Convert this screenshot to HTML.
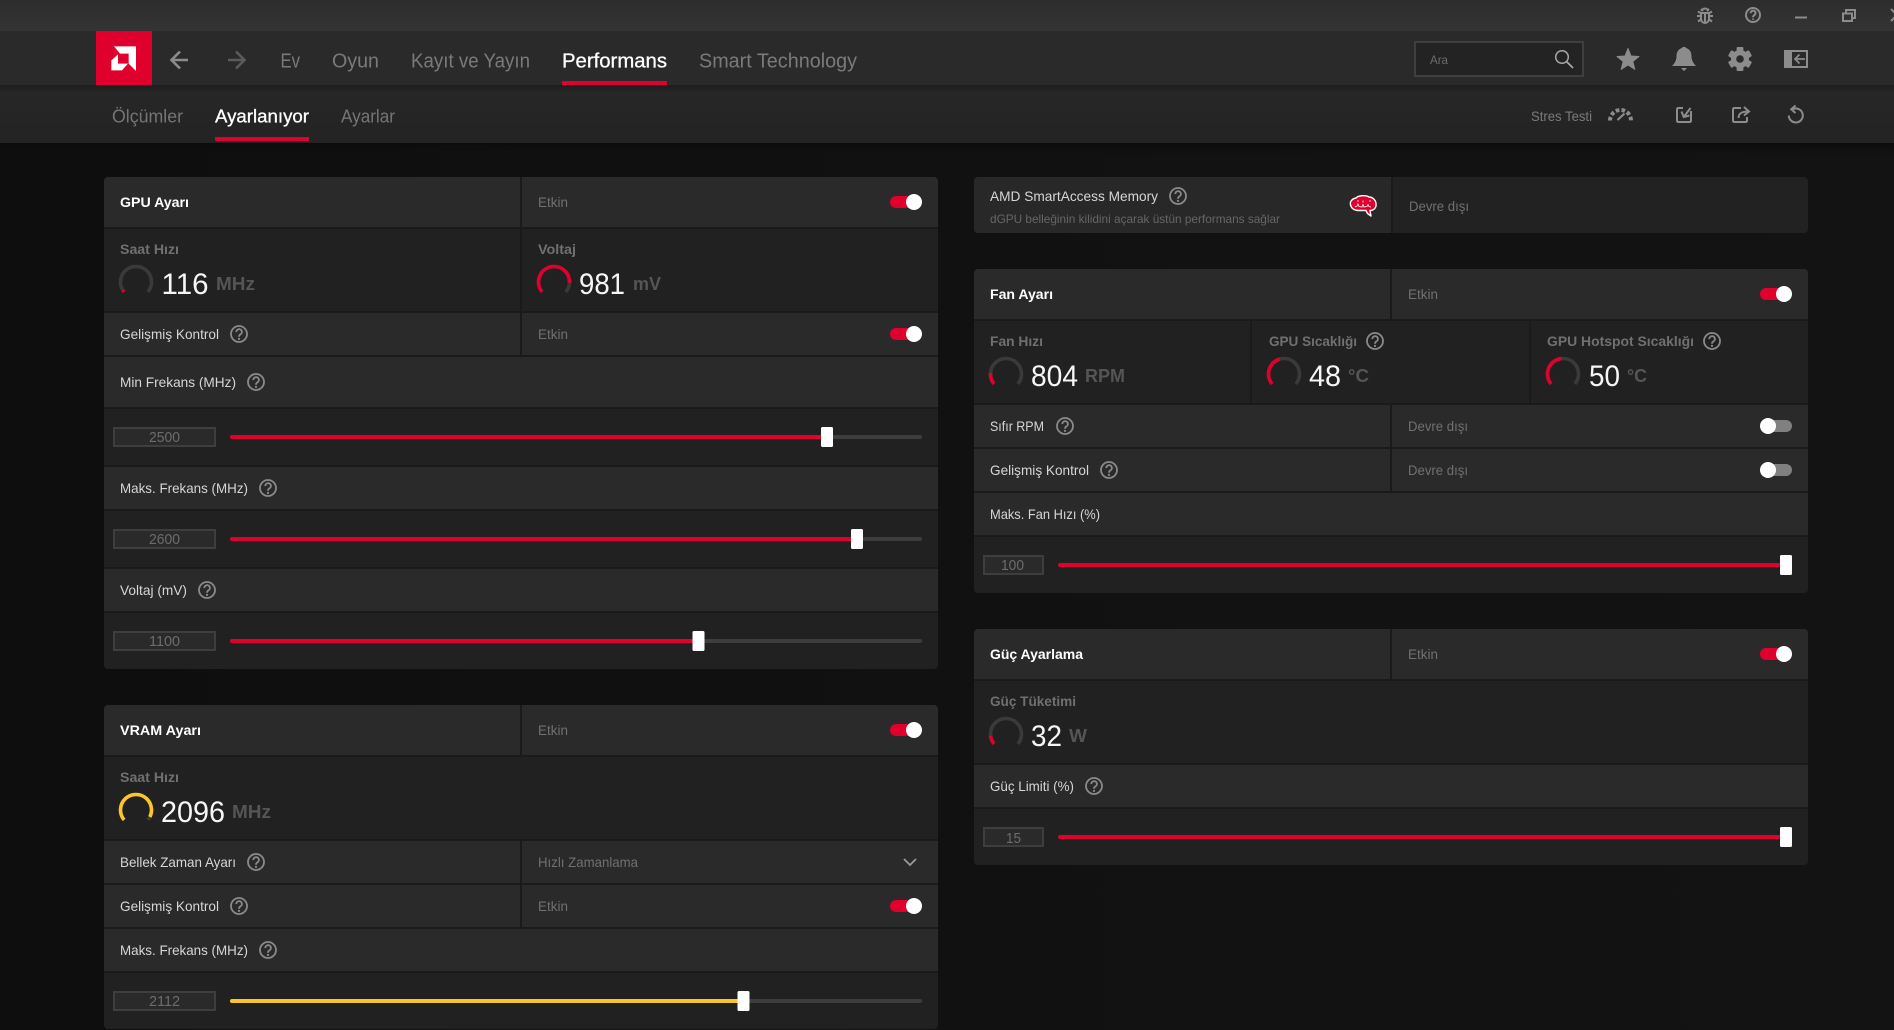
<!DOCTYPE html>
<html lang="tr">
<head>
<meta charset="utf-8">
<title>Performans - Ayarlanıyor</title>
<style>
html,body{margin:0;padding:0;width:1894px;height:1030px;overflow:hidden;background:#111}
svg{display:block}
text{font-family:"Liberation Sans",sans-serif;white-space:pre}
.nav{font-size:20px;fill:#7a7a7a}
.sub{font-size:18px;fill:#757575}
.act{fill:#fff;stroke:#fff;stroke-width:.3px}
.l{font-size:14px;fill:#d6d6d6}
.b{font-size:14px;font-weight:700;fill:#fff}
.m{font-size:14px;font-weight:700;fill:#707070}
.e{font-size:14px;fill:#707070}
.v{font-size:30px;fill:#f6f6f6}
.u{font-size:18px;font-weight:700;fill:#555}
.n{font-size:15px;fill:#6c6c6c}
.lt{fill:#2a2a2a}
.dk{fill:#212121}
.box{fill:#2a2a2a;stroke:#3e3e3e;stroke-width:2}
.tr{fill:#3d3d3d}
.red{fill:#e0002d}
.yel{fill:#fcc62a}
.kn{fill:#fff}
.ic{fill:none;stroke:#8c8c8c;stroke-width:2}
.if{fill:#8c8c8c}
</style>
</head>
<body>
<svg xmlns="http://www.w3.org/2000/svg" width="1894" height="1030" viewBox="0 0 1894 1030">
<defs>
<linearGradient id="bg" x1="0" x2="1" y1="0" y2="0"><stop offset="0" stop-color="#0e0e0e"/><stop offset=".5" stop-color="#111"/><stop offset="1" stop-color="#131313"/></linearGradient>
<linearGradient id="tb" x1="0" x2="0" y1="0" y2="1"><stop offset="0" stop-color="#2d2d2d"/><stop offset="1" stop-color="#343434"/></linearGradient>
<linearGradient id="sb" x1="0" x2="0" y1="0" y2="1"><stop offset="0" stop-color="#1d1d1d"/><stop offset=".14" stop-color="#272727"/><stop offset="1" stop-color="#232323"/></linearGradient>
<linearGradient id="sh" x1="0" x2="0" y1="0" y2="1"><stop offset="0" stop-color="#0b0b0b"/><stop offset="1" stop-color="#111" stop-opacity="0"/></linearGradient>
<g id="h" fill="none" stroke="#8a8a8a" stroke-width="1.8"><circle r="8"/><path d="M-2.7-1.9A2.8 2.8 0 1 1 1.6.3C.5 1 0 1.4 0 2.7"/><circle cy="4.9" r=".5" stroke-width="1.3"/></g>
<path id="g" pathLength="100" fill="none" stroke-width="3.6" d="M-11.87 9.96A15.5 15.5 0 1 1 11.87 9.96"/>
<clipPath id="c1"><rect x="104" y="177" width="834" height="492" rx="4"/></clipPath>
<clipPath id="c2"><rect x="104" y="705" width="834" height="324" rx="4"/></clipPath>
<clipPath id="c3"><rect x="974" y="177" width="834" height="56" rx="4"/></clipPath>
<clipPath id="c4"><rect x="974" y="269" width="834" height="324" rx="4"/></clipPath>
<clipPath id="c5"><rect x="974" y="629" width="834" height="236" rx="4"/></clipPath>
</defs>

<!-- page background -->
<rect width="1894" height="1030" fill="url(#bg)"/>
<rect y="143" width="1894" height="14" fill="url(#sh)"/>

<!-- title bar -->
<rect width="1894" height="31" fill="url(#tb)"/>
<g class="ic" stroke-width="1.7">
<path d="M1701 9l2 2M1709 9l-2 2M1698 11.500l3.500 2M1712 11.500l-3.500 2M1697 16h3.500M1713 16h-3.500M1698 21.500l3.500-2.500M1712 21.500l-3.500-2.500"/>
<path d="M1701 13h8v6a4 4 0 0 1-8 0z"/><path d="M1705 13v9"/>
<path d="M1702 11a3 2.500 0 0 1 6 0"/>
<circle cx="1753" cy="15" r="7"/>
<path d="M1750.700 13.200a2.400 2.400 0 1 1 3.700 1.900c-.9.600-1.400 1-1.400 2.100M1753 18.500v1.200"/>
<path d="M1795 17.500h12" stroke-width="2"/>
<path d="M1843 13.500h9v7.500h-9z M1846 13v-3h9v8h-3"/>
<path d="M1891 9l6 6M1891 21l6-6"/>
</g>

<!-- main nav -->
<rect y="31" width="1894" height="54" fill="#2a2a2a"/>
<rect x="96" y="31" width="56" height="54" fill="#e0002d"/>
<rect x="96" y="85" width="56" height="2" fill="#9c0020"/>
<g transform="translate(96 31) scale(.3333)" fill="#fff">
<path d="M54 46H120V120L98 98V68H72Z"/>
<path d="M46 88L66 70V98H96L78 118H46Z"/>
</g>
<path d="M188 60H172M180 51.500L171.500 60L180 68.500" fill="none" stroke="#8c8c8c" stroke-width="2.600"/>
<path d="M228 60H244M236 51.500L244.500 60L236 68.500" fill="none" stroke="#5b5b5b" stroke-width="2.600"/>
<text class="nav" x="280.500" y="67.500" textLength="19.500" lengthAdjust="spacingAndGlyphs">Ev</text>
<text class="nav" x="332" y="67.500" textLength="47" lengthAdjust="spacingAndGlyphs">Oyun</text>
<text class="nav" x="411" y="67.500" textLength="119" lengthAdjust="spacingAndGlyphs">Kayıt ve Yayın</text>
<text class="nav act" x="562" y="67.500" textLength="105" lengthAdjust="spacingAndGlyphs">Performans</text>
<text class="nav" x="699" y="67.500" textLength="158" lengthAdjust="spacingAndGlyphs">Smart Technology</text>
<rect x="562" y="81" width="105" height="4" class="red"/>

<rect x="1415" y="42" width="168" height="34" fill="#232323" stroke="#3f3f3f" stroke-width="2"/>
<text x="1430" y="64" font-size="12" fill="#6c6c6c" textLength="18" lengthAdjust="spacingAndGlyphs">Ara</text>
<circle cx="1562" cy="57" r="6.300" fill="none" stroke="#a8a8a8" stroke-width="1.500"/>
<path d="M1566.500 61.500l6.500 6.500" stroke="#a8a8a8" stroke-width="1.800" fill="none"/>

<path class="if" stroke="#8c8c8c" stroke-width="1" stroke-linejoin="round" d="M1628 48.500L1631 56L1639 56.500L1632.800 61.500L1634.800 69.300L1628 65L1621.200 69.300L1623.200 61.500L1617 56.500L1625 56Z"/>
<path class="if" d="M1672 66C1675 63 1676.500 60 1676.500 56C1676.500 51.500 1679 48.800 1682 48C1682 46.500 1686 46.500 1686 48C1689 48.800 1691.500 51.500 1691.500 56C1691.500 60 1693 63 1696 66ZM1681 68H1687L1684 71Z"/>
<g class="if" transform="translate(1740 59)">
<rect x="-3.400" y="-12" width="6.800" height="24" rx="1"/>
<rect x="-3.400" y="-12" width="6.800" height="24" rx="1" transform="rotate(60)"/>
<rect x="-3.400" y="-12" width="6.800" height="24" rx="1" transform="rotate(120)"/>
<circle r="9"/>
<circle r="3.800" fill="#2a2a2a"/>
</g>
<rect x="1784" y="50" width="24" height="18" class="if"/>
<rect x="1792" y="52" width="14" height="14" fill="#2a2a2a"/>
<path d="M1805 59H1794.500M1799.500 54.500L1795 59L1799.500 63.500" fill="none" stroke="#8c8c8c" stroke-width="1.700"/>

<!-- sub nav -->
<rect y="85" width="1894" height="58" fill="url(#sb)"/>
<text class="sub" x="112" y="122.500" textLength="71" lengthAdjust="spacingAndGlyphs">Ölçümler</text>
<text class="sub act" x="215" y="122.500" textLength="94" lengthAdjust="spacingAndGlyphs">Ayarlanıyor</text>
<text class="sub" x="341" y="122.500" textLength="54" lengthAdjust="spacingAndGlyphs">Ayarlar</text>
<rect x="215" y="137" width="94" height="4" class="red"/>
<text class="e" x="1531" y="121" textLength="61" lengthAdjust="spacingAndGlyphs" style="fill:#7a7a7a">Stres Testi</text>
<path d="M1610 120.500A10.500 10.500 0 0 1 1631 120.500" fill="none" stroke="#8c8c8c" stroke-width="4" stroke-dasharray="3.600 2.200"/>
<path d="M1617.500 120L1624.500 113.500" stroke="#8c8c8c" stroke-width="2.200" fill="none"/>
<g class="ic" stroke-width="1.800">
<path d="M1683 108H1678.500Q1677 108 1677 109.500V120.500Q1677 122 1678.500 122H1689.500Q1691 122 1691 120.500V111"/>
<path d="M1690.500 108L1684.500 116M1681.500 111.500L1683.800 117L1689.500 115.500"/>
<path d="M1741 108H1734.500Q1733 108 1733 109.500V120.500Q1733 122 1734.500 122H1745.500Q1747 122 1747 120.500V117"/>
<path d="M1738.500 118C1738.500 113.500 1741.500 111.500 1748.500 111.500M1744 107L1749 111.500L1744 115.500"/>
<path d="M1792.500 109.300A7 7 0 1 1 1788.800 115.500M1795.500 105.500L1791.300 109.300L1795.500 113"/>
</g>

<!-- GPU Ayarı -->
<g clip-path="url(#c1)">
<rect x="104" y="177" width="834" height="492" fill="#1a1a1a"/>
<rect class="lt" x="104" y="177" width="416" height="50"/><rect class="lt" x="522" y="177" width="416" height="50"/>
<rect class="dk" x="104" y="229" width="416" height="82"/><rect class="dk" x="522" y="229" width="416" height="82"/>
<rect class="lt" x="104" y="313" width="416" height="42"/><rect class="lt" x="522" y="313" width="416" height="42"/>
<rect class="lt" x="104" y="357" width="834" height="50"/>
<rect class="dk" x="104" y="409" width="834" height="56"/>
<rect class="lt" x="104" y="467" width="834" height="42"/>
<rect class="dk" x="104" y="511" width="834" height="56"/>
<rect class="lt" x="104" y="569" width="834" height="42"/>
<rect class="dk" x="104" y="613" width="834" height="56"/>
</g>
<text class="b" x="120" y="207" textLength="69" lengthAdjust="spacingAndGlyphs">GPU Ayarı</text>
<text class="e" x="538" y="207" textLength="30" lengthAdjust="spacingAndGlyphs">Etkin</text>
<rect class="red" x="890" y="196" width="24" height="12" rx="6"/><circle class="kn" cx="914" cy="202" r="8"/>
<text class="m" x="120" y="254" textLength="59" lengthAdjust="spacingAndGlyphs">Saat Hızı</text>
<use href="#g" x="136" y="282" stroke="#3a3a3a"/><use href="#g" x="136" y="282" stroke="#e0002d" stroke-dasharray="3 200"/>
<text class="v" x="161.500" y="294" textLength="47" lengthAdjust="spacingAndGlyphs">116</text>
<text class="u" x="216" y="290" textLength="39" lengthAdjust="spacingAndGlyphs">MHz</text>
<text class="m" x="538" y="254" textLength="38" lengthAdjust="spacingAndGlyphs">Voltaj</text>
<use href="#g" x="554" y="282" stroke="#3a3a3a"/><use href="#g" x="554" y="282" stroke="#e0002d" stroke-dasharray="86 200"/>
<text class="v" x="579" y="294" textLength="46" lengthAdjust="spacingAndGlyphs">981</text>
<text class="u" x="633" y="290" textLength="28" lengthAdjust="spacingAndGlyphs">mV</text>
<text class="l" x="120" y="339" textLength="99" lengthAdjust="spacingAndGlyphs">Gelişmiş Kontrol</text>
<use href="#h" x="239" y="334"/>
<text class="e" x="538" y="339" textLength="30" lengthAdjust="spacingAndGlyphs">Etkin</text>
<rect class="red" x="890" y="328" width="24" height="12" rx="6"/><circle class="kn" cx="914" cy="334" r="8"/>
<text class="l" x="120" y="387" textLength="116" lengthAdjust="spacingAndGlyphs">Min Frekans (MHz)</text>
<use href="#h" x="256" y="382"/>
<rect class="box" x="114" y="428" width="101" height="18"/>
<text class="n" x="149" y="442" textLength="31" lengthAdjust="spacingAndGlyphs">2500</text>
<rect class="tr" x="230" y="435" width="692" height="4" rx="2"/><rect class="red" x="230" y="435" width="597" height="4" rx="2"/>
<rect class="kn" x="821" y="427" width="12" height="20" rx="1.500"/>
<text class="l" x="120" y="493" textLength="128" lengthAdjust="spacingAndGlyphs">Maks. Frekans (MHz)</text>
<use href="#h" x="268" y="488"/>
<rect class="box" x="114" y="530" width="101" height="18"/>
<text class="n" x="149" y="544" textLength="31" lengthAdjust="spacingAndGlyphs">2600</text>
<rect class="tr" x="230" y="537" width="692" height="4" rx="2"/><rect class="red" x="230" y="537" width="627" height="4" rx="2"/>
<rect class="kn" x="851" y="529" width="12" height="20" rx="1.500"/>
<text class="l" x="120" y="595" textLength="67" lengthAdjust="spacingAndGlyphs">Voltaj (mV)</text>
<use href="#h" x="207" y="590"/>
<rect class="box" x="114" y="632" width="101" height="18"/>
<text class="n" x="149" y="646" textLength="31" lengthAdjust="spacingAndGlyphs">1100</text>
<rect class="tr" x="230" y="639" width="692" height="4" rx="2"/><rect class="red" x="230" y="639" width="468" height="4" rx="2"/>
<rect class="kn" x="692.500" y="631" width="12" height="20" rx="1.500"/>

<!-- VRAM Ayarı -->
<g clip-path="url(#c2)">
<rect x="104" y="705" width="834" height="324" fill="#1a1a1a"/>
<rect class="lt" x="104" y="705" width="416" height="50"/><rect class="lt" x="522" y="705" width="416" height="50"/>
<rect class="dk" x="104" y="757" width="834" height="82"/>
<rect class="lt" x="104" y="841" width="416" height="42"/><rect class="lt" x="522" y="841" width="416" height="42"/>
<rect class="lt" x="104" y="885" width="416" height="42"/><rect class="lt" x="522" y="885" width="416" height="42"/>
<rect class="lt" x="104" y="929" width="834" height="42"/>
<rect class="dk" x="104" y="973" width="834" height="56"/>
</g>
<text class="b" x="120" y="735" textLength="81" lengthAdjust="spacingAndGlyphs">VRAM Ayarı</text>
<text class="e" x="538" y="735" textLength="30" lengthAdjust="spacingAndGlyphs">Etkin</text>
<rect class="red" x="890" y="724" width="24" height="12" rx="6"/><circle class="kn" cx="914" cy="730" r="8"/>
<text class="m" x="120" y="782" textLength="59" lengthAdjust="spacingAndGlyphs">Saat Hızı</text>
<use href="#g" x="136" y="810" stroke="#3a3a3a"/><use href="#g" x="136" y="810" stroke="#fcc62a" stroke-dasharray="95 200"/>
<text class="v" x="161" y="822" textLength="64" lengthAdjust="spacingAndGlyphs">2096</text>
<text class="u" x="232" y="818" textLength="39" lengthAdjust="spacingAndGlyphs">MHz</text>
<text class="l" x="120" y="867" textLength="116" lengthAdjust="spacingAndGlyphs">Bellek Zaman Ayarı</text>
<use href="#h" x="256" y="862"/>
<text class="e" x="538" y="867" textLength="100" lengthAdjust="spacingAndGlyphs">Hızlı Zamanlama</text>
<path d="M904 859L910 865L916 859" fill="none" stroke="#9a9a9a" stroke-width="1.800"/>
<text class="l" x="120" y="911" textLength="99" lengthAdjust="spacingAndGlyphs">Gelişmiş Kontrol</text>
<use href="#h" x="239" y="906"/>
<text class="e" x="538" y="911" textLength="30" lengthAdjust="spacingAndGlyphs">Etkin</text>
<rect class="red" x="890" y="900" width="24" height="12" rx="6"/><circle class="kn" cx="914" cy="906" r="8"/>
<text class="l" x="120" y="955" textLength="128" lengthAdjust="spacingAndGlyphs">Maks. Frekans (MHz)</text>
<use href="#h" x="268" y="950"/>
<rect class="box" x="114" y="992" width="101" height="18"/>
<text class="n" x="149" y="1006" textLength="31" lengthAdjust="spacingAndGlyphs">2112</text>
<rect class="tr" x="230" y="999" width="692" height="4" rx="2"/><rect class="yel" x="230" y="999" width="514" height="4" rx="2"/>
<rect class="kn" x="737.500" y="991" width="12" height="20" rx="1.500"/>

<!-- SmartAccess Memory -->
<g clip-path="url(#c3)">
<rect x="974" y="177" width="834" height="56" fill="#1a1a1a"/>
<rect x="974" y="177" width="417" height="56" fill="#282828"/>
<rect x="1393" y="177" width="415" height="56" fill="#222"/>
</g>
<text class="l" x="990" y="201" textLength="168" lengthAdjust="spacingAndGlyphs">AMD SmartAccess Memory</text>
<use href="#h" x="1178" y="196"/>
<text x="990" y="223" font-size="12" fill="#666" textLength="290" lengthAdjust="spacingAndGlyphs">dGPU belleğinin kilidini açarak üstün performans sağlar</text>
<path d="M1350.500 205C1349.500 201.500 1352.500 198.500 1356 198C1358.500 195.300 1366 195 1369 197C1373 197 1376 200.500 1376 204C1376.500 208 1373.500 210.500 1370 210.500L1371 216L1367.500 213.500L1366 210.500H1358C1354.500 210.500 1351.500 208.500 1350.500 205Z" fill="#e0002d" stroke="#fff" stroke-width="1.400" stroke-linejoin="round"/>
<path d="M1355 207l2-1 1-2 1 2.500 3 .5 1-2.500 1 2.500 3-.5 1-2 1 2 2 .5M1357 201h2M1363 200.500v2M1369 201h2" fill="none" stroke="#fff" stroke-width=".8"/>
<text class="e" x="1409" y="211" textLength="60" lengthAdjust="spacingAndGlyphs">Devre dışı</text>

<!-- Fan Ayarı -->
<g clip-path="url(#c4)">
<rect x="974" y="269" width="834" height="324" fill="#1a1a1a"/>
<rect class="lt" x="974" y="269" width="416" height="50"/><rect class="lt" x="1392" y="269" width="416" height="50"/>
<rect class="dk" x="974" y="321" width="276" height="82"/><rect class="dk" x="1252" y="321" width="277" height="82"/><rect class="dk" x="1531" y="321" width="277" height="82"/>
<rect class="lt" x="974" y="405" width="416" height="42"/><rect class="lt" x="1392" y="405" width="416" height="42"/>
<rect class="lt" x="974" y="449" width="416" height="42"/><rect class="lt" x="1392" y="449" width="416" height="42"/>
<rect class="lt" x="974" y="493" width="834" height="42"/>
<rect class="dk" x="974" y="537" width="834" height="56"/>
</g>
<text class="b" x="990" y="299" textLength="63" lengthAdjust="spacingAndGlyphs">Fan Ayarı</text>
<text class="e" x="1408" y="299" textLength="30" lengthAdjust="spacingAndGlyphs">Etkin</text>
<rect class="red" x="1760" y="288" width="24" height="12" rx="6"/><circle class="kn" cx="1784" cy="294" r="8"/>
<text class="m" x="990" y="346" textLength="53" lengthAdjust="spacingAndGlyphs">Fan Hızı</text>
<use href="#g" x="1006" y="374" stroke="#3a3a3a"/><use href="#g" x="1006" y="374" stroke="#e0002d" stroke-dasharray="17 200"/>
<text class="v" x="1031" y="386" textLength="47" lengthAdjust="spacingAndGlyphs">804</text>
<text class="u" x="1085" y="382" textLength="40" lengthAdjust="spacingAndGlyphs">RPM</text>
<text class="m" x="1269" y="346" textLength="88" lengthAdjust="spacingAndGlyphs">GPU Sıcaklığı</text>
<use href="#h" x="1375" y="341"/>
<use href="#g" x="1284" y="374" stroke="#3a3a3a"/><use href="#g" x="1284" y="374" stroke="#e0002d" stroke-dasharray="44 200"/>
<text class="v" x="1309" y="386" textLength="32" lengthAdjust="spacingAndGlyphs">48</text>
<text class="u" x="1348" y="382" textLength="21" lengthAdjust="spacingAndGlyphs">°C</text>
<text class="m" x="1547" y="346" textLength="147" lengthAdjust="spacingAndGlyphs">GPU Hotspot Sıcaklığı</text>
<use href="#h" x="1712" y="341"/>
<use href="#g" x="1563" y="374" stroke="#3a3a3a"/><use href="#g" x="1563" y="374" stroke="#e0002d" stroke-dasharray="48 200"/>
<text class="v" x="1589" y="386" textLength="31" lengthAdjust="spacingAndGlyphs">50</text>
<text class="u" x="1627" y="382" textLength="20" lengthAdjust="spacingAndGlyphs">°C</text>
<text class="l" x="990" y="431" textLength="54" lengthAdjust="spacingAndGlyphs">Sıfır RPM</text>
<use href="#h" x="1065" y="426"/>
<text class="e" x="1408" y="431" textLength="60" lengthAdjust="spacingAndGlyphs">Devre dışı</text>
<rect x="1768" y="420" width="24" height="12" rx="6" fill="#808080"/><circle class="kn" cx="1768" cy="426" r="8"/>
<text class="l" x="990" y="475" textLength="99" lengthAdjust="spacingAndGlyphs">Gelişmiş Kontrol</text>
<use href="#h" x="1109" y="470"/>
<text class="e" x="1408" y="475" textLength="60" lengthAdjust="spacingAndGlyphs">Devre dışı</text>
<rect x="1768" y="464" width="24" height="12" rx="6" fill="#808080"/><circle class="kn" cx="1768" cy="470" r="8"/>
<text class="l" x="990" y="519" textLength="110" lengthAdjust="spacingAndGlyphs">Maks. Fan Hızı (%)</text>
<rect class="box" x="984" y="556" width="59" height="18"/>
<text class="n" x="1001" y="570" textLength="23" lengthAdjust="spacingAndGlyphs">100</text>
<rect class="tr" x="1058" y="563" width="734" height="4" rx="2"/><rect class="red" x="1058" y="563" width="728" height="4" rx="2"/>
<rect class="kn" x="1780" y="555" width="12" height="20" rx="1.500"/>

<!-- Güç Ayarlama -->
<g clip-path="url(#c5)">
<rect x="974" y="629" width="834" height="236" fill="#1a1a1a"/>
<rect class="lt" x="974" y="629" width="416" height="50"/><rect class="lt" x="1392" y="629" width="416" height="50"/>
<rect class="dk" x="974" y="681" width="834" height="82"/>
<rect class="lt" x="974" y="765" width="834" height="42"/>
<rect class="dk" x="974" y="809" width="834" height="56"/>
</g>
<text class="b" x="990" y="659" textLength="93" lengthAdjust="spacingAndGlyphs">Güç Ayarlama</text>
<text class="e" x="1408" y="659" textLength="30" lengthAdjust="spacingAndGlyphs">Etkin</text>
<rect class="red" x="1760" y="648" width="24" height="12" rx="6"/><circle class="kn" cx="1784" cy="654" r="8"/>
<text class="m" x="990" y="706" textLength="86" lengthAdjust="spacingAndGlyphs">Güç Tüketimi</text>
<use href="#g" x="1006" y="734" stroke="#3a3a3a"/><use href="#g" x="1006" y="734" stroke="#e0002d" stroke-dasharray="13 200"/>
<text class="v" x="1031" y="746" textLength="31" lengthAdjust="spacingAndGlyphs">32</text>
<text class="u" x="1069" y="742" textLength="18" lengthAdjust="spacingAndGlyphs">W</text>
<text class="l" x="990" y="791" textLength="84" lengthAdjust="spacingAndGlyphs">Güç Limiti (%)</text>
<use href="#h" x="1094" y="786"/>
<rect class="box" x="984" y="828" width="59" height="18"/>
<text class="n" x="1006" y="843" textLength="15" lengthAdjust="spacingAndGlyphs">15</text>
<rect class="tr" x="1058" y="835" width="734" height="4" rx="2"/><rect class="red" x="1058" y="835" width="728" height="4" rx="2"/>
<rect class="kn" x="1780" y="827" width="12" height="20" rx="1.500"/>
</svg>
</body>
</html>
